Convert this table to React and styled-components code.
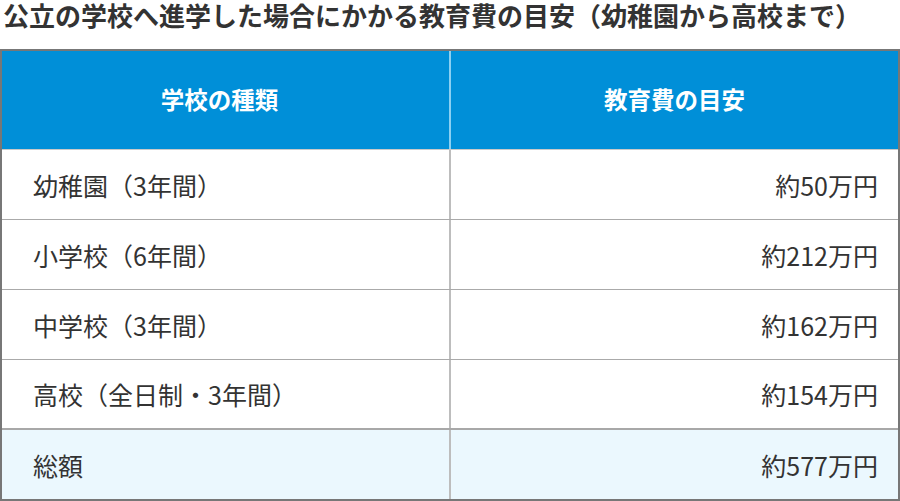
import React from "react";
import styled, { createGlobalStyle } from "styled-components";

const GlobalStyle = createGlobalStyle`
  *, *::before, *::after {
    box-sizing: border-box;
  }
  body {
    margin: 0;
    background: #fff;
    font-family: "Noto Sans CJK JP", "Noto Sans", sans-serif;
    color: #333;
  }
`;

const Page = styled.div`
  width: 900px;
`;

const Title = styled.h2`
  margin: 0;
  height: 49px;
  padding-left: 3px;
  font-size: 26px;
  line-height: 30px;
  font-weight: 700;
  color: #333;
  white-space: nowrap;
`;

const Table = styled.div`
  border: 2px solid #777;
  display: flex;
  flex-direction: column;
`;

const Row = styled.div`
  display: grid;
  grid-template-columns: 447px 1fr;
  height: ${(p) => p.$height}px;
  border-bottom: ${(p) => p.$line || "none"};
  background: ${(p) => p.$bg || "#fff"};
`;

const HeadCell = styled.div`
  display: flex;
  align-items: center;
  justify-content: center;
  background: #008fd8;
  color: #fff;
  font-size: 23.5px;
  font-weight: 700;
  padding: 0 ${(p) => p.$shift || 0}px 3px 0;
  & + & {
    border-left: 2px solid #8bd0f2;
  }
`;

const Cell = styled.div`
  display: flex;
  align-items: center;
  justify-content: ${(p) => (p.$right ? "flex-end" : "flex-start")};
  padding: ${(p) => (p.$right ? "0 20px 0 0" : "0 0 0 31px")};
  font-size: 25px;
  color: #333;
  & + & {
    border-left: 2px solid #bdbdbd;
  }
`;

const rows = [
  ["幼稚園（3年間）", "約50万円"],
  ["小学校（6年間）", "約212万円"],
  ["中学校（3年間）", "約162万円"],
  ["高校（全日制・3年間）", "約154万円"],
];

export default function App() {
  return (
    <Page>
      <GlobalStyle />
      <Title>公立の学校へ進学した場合にかかる教育費の目安（幼稚園から高校まで）</Title>
      <Table>
        <Row $height={99} $line="1px solid #c9c9c9">
          <HeadCell $shift={12}>学校の種類</HeadCell>
          <HeadCell>教育費の目安</HeadCell>
        </Row>
        {rows.map(([name, cost], i) => (
          <Row
            key={name}
            $height={70}
            $line={i === rows.length - 1 ? "2px solid #a8a8a8" : "1px solid #aaa"}
          >
            <Cell>{name}</Cell>
            <Cell $right>{cost}</Cell>
          </Row>
        ))}
        <Row $height={69} $bg="#ebf8fe">
          <Cell>総額</Cell>
          <Cell $right>約577万円</Cell>
        </Row>
      </Table>
    </Page>
  );
}
